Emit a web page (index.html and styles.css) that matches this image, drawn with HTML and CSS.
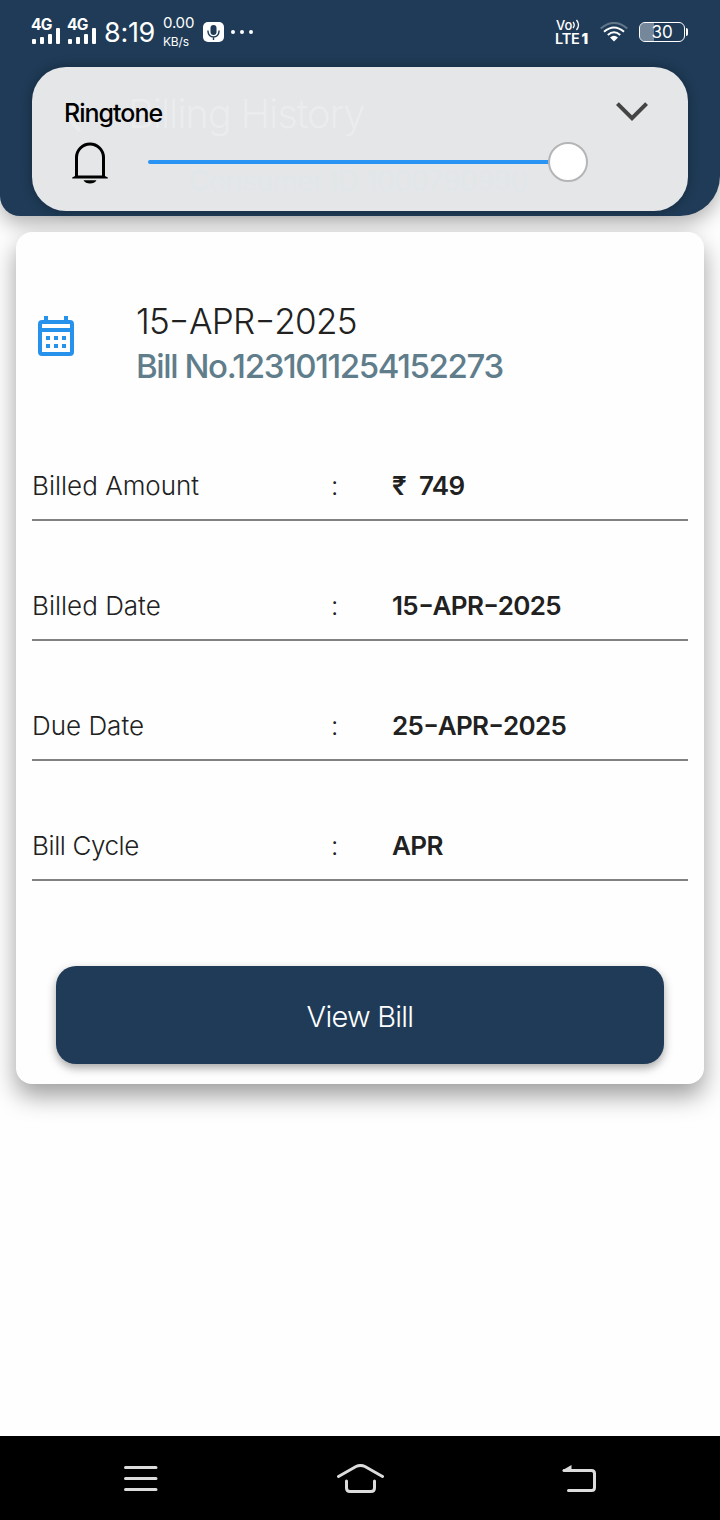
FILE: index.html
```html
<!DOCTYPE html>
<html lang="en">
  <head>
    <meta charset="UTF-8" />
    <meta name="viewport" content="width=device-width, initial-scale=1.0" />
    <title>Billing History</title>
    <link rel="stylesheet" href="styles.css">
  </head>
  <body>
    <header class="app-header">
      <div class="status-bar">
        <div class="status-left">
          <div class="signal">
            <span>4G</span>
            <svg width="28" height="27" viewBox="0 0 28 27" fill="#fff">
              <rect x="0" y="21" width="4" height="5" rx="1" />
              <rect x="8" y="19" width="4" height="7" rx="1" />
              <rect x="16" y="16" width="4" height="10" rx="1" />
              <rect x="24" y="10" width="4" height="16" rx="1" />
            </svg>
          </div>
          <div class="signal">
            <span>4G</span>
            <svg width="28" height="27" viewBox="0 0 28 27" fill="#fff">
              <rect x="0" y="21" width="4" height="5" rx="1" />
              <rect x="8" y="19" width="4" height="7" rx="1" />
              <rect x="16" y="16" width="4" height="10" rx="1" />
              <rect x="24" y="10" width="4" height="16" rx="1" />
            </svg>
          </div>
          <span class="clock">8:19</span>
          <div class="speed"><span>0.00</span><small>KB/s</small></div>
          <svg class="mic" width="21" height="20" viewBox="0 0 21 20">
            <rect width="21" height="20" rx="5" fill="#fff" />
            <rect x="7.5" y="3" width="6" height="10" rx="3" fill="#1f3b57" />
            <path d="M5 8.5v1a5.5 5.5 0 0 0 11 0v-1M10.5 15v3" fill="none" stroke="#1f3b57" stroke-width="1.4" />
          </svg>
          <svg class="dots" width="22" height="4" viewBox="0 0 22 4" fill="#fff">
            <circle cx="2" cy="2" r="2" />
            <circle cx="11" cy="2" r="2" />
            <circle cx="20" cy="2" r="2" />
          </svg>
        </div>
        <div class="status-right">
          <div class="volte">
            <div class="vo">Vo<svg width="8" height="12" viewBox="0 0 8 12" fill="none" stroke="#fff" stroke-width="1.3"><path d="M1 3q2.5 3 0 6M4.5 1q4 5 0 10" /></svg></div>
            <div class="lte">LTE<b>1</b></div>
          </div>
          <svg class="wifi" width="28" height="20" viewBox="0 0 28 20" fill="none" stroke="#fff" stroke-width="2">
            <path d="M.7 6.5Q14-4.6 27.3 6.5" opacity=".3" />
            <path d="M4 9.8Q14 1.2 24 9.8" />
            <path d="M7.8 13Q14 7.6 20.2 13" />
            <path d="M10 15.4Q14 12 18 15.4L14 19.5Z" fill="#fff" stroke="none" />
          </svg>
          <div class="battery"><span>30</span></div>
        </div>
      </div>
    </header>

    <!-- Volume panel -->
    <section class="volume-panel">
      <svg class="ghost-back" width="18" height="34" viewBox="0 0 18 34" fill="none" stroke="#e9ebec" stroke-width="4"><path d="M16 2L3 17l13 15" /></svg>
      <span class="ghost-title">Billing History</span>
      <span class="ghost-id">Consumer ID 1000790990</span>
      <div class="volume-head">
        <span class="volume-label">Ringtone</span>
        <svg width="32" height="20" viewBox="0 0 32 20" fill="none" stroke="#444" stroke-width="4"><path d="M1.4 1.6L16 16.2 30.6 1.6" /></svg>
      </div>
      <div class="volume-row">
        <svg class="bell" width="36" height="42" viewBox="0 0 36 42">
          <path d="M4.5 35V15.5a13.5 13.5 0 0 1 27 0V35" fill="none" stroke="#000" stroke-width="3" />
          <path d="M4 33.4h28l3.8 2v1H.2v-1z" />
          <path d="M11.5 38.2h13q-2 3.2-6.5 3.2t-6.5-3.2z" />
        </svg>
        <div class="slider">
          <div class="track"></div>
          <div class="thumb"></div>
        </div>
      </div>
    </section>

    <main class="card">
      <div class="bill-head">
        <svg width="36" height="40" viewBox="0 0 36 40" fill="#2792ec">
          <path fill-rule="evenodd" d="M6 0h4v4h16V0h4v4h2a4 4 0 0 1 4 4v28a4 4 0 0 1-4 4H4a4 4 0 0 1-4-4V8a4 4 0 0 1 4-4h2zM4 8v4h28V8zM4 16v20h28V16z" />
          <path d="M8 20h4v4H8zM16 20h4v4h-4zM24 20h4v4h-4zM8 28h4v4H8zM16 28h4v4h-4zM24 28h4v4h-4z" />
        </svg>
        <div>
          <div class="bill-date">15<b>-</b>APR<b>-</b>2025</div>
          <div class="bill-no">Bill No.1231011254152273</div>
        </div>
      </div>

      <div class="row">
        <span>Billed Amount</span>
        <span>:</span>
        <strong class="amount"><i>₹</i>749</strong>
      </div>
      <div class="row">
        <span>Billed Date</span>
        <span>:</span>
        <strong>15<b>-</b>APR<b>-</b>2025</strong>
      </div>
      <div class="row">
        <span>Due Date</span>
        <span>:</span>
        <strong>25<b>-</b>APR<b>-</b>2025</strong>
      </div>
      <div class="row">
        <span class="cycle">Bill Cycle</span>
        <span>:</span>
        <strong>APR</strong>
      </div>

      <button class="view-bill">View Bill</button>
    </main>

    <nav class="nav-bar">
      <svg width="34" height="26" viewBox="0 0 34 26" fill="none" stroke="#dcdcdc" stroke-width="3" stroke-linecap="round">
        <path d="M1.5 1.5h30.5M1.5 12.5h30.5M1.5 23.5h30.5" />
      </svg>
      <svg width="48" height="30" viewBox="0 0 48 30" fill="none" stroke="#dcdcdc" stroke-width="3" stroke-linecap="round">
        <path d="M2.5 12.5L20 2.5q4.5-2 9 0L46.5 12.5M10.5 17v7q0 3.5 3.5 3.5h21q3.5 0 3.5-3.5v-7" />
      </svg>
      <svg width="34" height="28" viewBox="0 0 34 28" fill="none" stroke="#dcdcdc" stroke-width="3" stroke-linecap="round">
        <path d="M2 5.5h27.5q3 0 3 3v14q0 3-3 3H6.5" />
        <path d="M0 5.5L9.5 0V6z" fill="#dcdcdc" stroke="none" />
      </svg>
    </nav>
  </body>
</html>
```
FILE: styles.css
```css
* {
  box-sizing: border-box;
}

body {
  margin: 0;
  height: 1520px;
  display: flex;
  flex-direction: column;
  position: relative;
  overflow: hidden;
  background: #fefefe;
  color: #212121;
  font-family: Inter, "Noto Sans", sans-serif;
}

svg {
  display: block;
  flex: none;
}

.app-header {
  height: 216px;
  flex: none;
  background: #1f3b57;
  border-radius: 0 0 40px 20px;
  box-shadow: 0 8px 20px rgba(0, 0, 0, 0.3);
  color: #fff;
}

.status-bar {
  height: 64px;
  padding: 0 35px 0 32px;
  display: flex;
  justify-content: space-between;
}

.status-left,
.status-right {
  display: flex;
  align-items: center;
}

.signal {
  position: relative;
  width: 28px;
  margin-right: 8px;
}

.signal svg {
  margin-top: -2px;
}

.signal span {
  position: absolute;
  left: -1px;
  top: -2px;
  font-size: 15.5px;
  line-height: 14px;
  font-weight: 700;
  letter-spacing: -0.8px;
}

.clock {
  width: 59px;
  font-size: 27px;
  letter-spacing: -0.3px;
}

.speed {
  width: 40px;
  font-size: 15px;
  line-height: 18px;
  letter-spacing: -0.2px;
}

.speed span,
.speed small {
  display: block;
}

.speed small {
  font-size: 12px;
  position: relative;
  top: 1px;
}

.mic {
  margin-right: 7px;
}

.volte {
  width: 45px;
  font-weight: 500;
}

.vo {
  display: flex;
  align-items: center;
  padding-left: 1px;
  font-size: 13px;
  line-height: 12px;
}

.lte {
  display: flex;
  gap: 2px;
  font-size: 14.5px;
  line-height: 15px;
  font-weight: 600;
  letter-spacing: -0.2px;
}

.wifi {
  margin-right: 11px;
}

.battery {
  position: relative;
  width: 46px;
  height: 20px;
  border: 1.5px solid #fff;
  border-radius: 6px;
  background: linear-gradient(to right, #75879a 14px, transparent 14px);
  background-clip: padding-box;
  font-size: 17px;
  line-height: 19px;
  text-align: center;
}

.battery::after {
  content: "";
  position: absolute;
  right: -4px;
  top: 5px;
  width: 2px;
  height: 8px;
  border-radius: 0 2px 2px 0;
  background: #fff;
}

/* volume panel */
.volume-panel {
  position: absolute;
  left: 32px;
  top: 67px;
  width: 656px;
  height: 144px;
  padding: 31px 40px 0 32px;
  border-radius: 34px;
  background: #e4e6e8;
  box-shadow: 0 0 12px rgba(0, 0, 0, 0.3);
  color: #000;
}

.ghost-back {
  position: absolute;
  left: 32px;
  top: 32px;
}

.ghost-title,
.ghost-id {
  position: absolute;
  font-weight: 300;
  white-space: nowrap;
}

.ghost-title {
  left: 96px;
  top: 23px;
  font-size: 40px;
  line-height: 48px;
  letter-spacing: -1.2px;
  color: #ebeced;
}

.ghost-id {
  left: 157px;
  top: 97px;
  font-size: 28px;
  line-height: 34px;
  letter-spacing: -0.1px;
  color: #e1e6e9;
}

.volume-head {
  position: relative;
  display: flex;
  justify-content: space-between;
  height: 43px;
}

.volume-head svg {
  margin-top: 4px;
}

.volume-label {
  font-size: 25px;
  line-height: 30px;
  font-weight: 500;
  letter-spacing: -1px;
}

.volume-row {
  position: relative;
  display: flex;
  align-items: center;
  height: 42px;
  padding-left: 8px;
}

.bell {
  margin-top: 1px;
}

.slider {
  display: flex;
  align-items: center;
  margin-left: 40px;
}

.track {
  width: 402px;
  height: 4px;
  border-radius: 2px;
  background: #2a94f4;
}

.thumb {
  width: 40px;
  height: 40px;
  margin-left: -2px;
  border: 2px solid #b5b5b5;
  border-radius: 50%;
  background: #fff;
}

/* bill card */
.card {
  position: relative;
  height: 852px;
  margin: 16px 16px 0;
  padding: 68px 16px 20px;
  border-radius: 16px;
  background: #fefefe;
  box-shadow: 0 12px 24px rgba(0, 0, 0, 0.38);
}

.bill-head {
  display: flex;
  gap: 62px;
  height: 100px;
  padding-left: 6px;
}

.bill-head svg {
  margin-top: 16px;
}

.bill-date {
  font-size: 35px;
  line-height: 42px;
  font-weight: 300;
  letter-spacing: -0.75px;
}

/* wide, raised dash between date parts */
.bill-date b,
.row strong b {
  display: inline-block;
  font-weight: inherit;
  font-feature-settings: "case";
  transform: scaleX(1.3);
}

.bill-date b {
  margin: 0 2.4px;
}

.row strong b {
  margin: 0 1.5px;
}

.bill-no {
  margin-top: 4px;
  font-size: 33px;
  line-height: 40px;
  font-weight: 500;
  letter-spacing: -1.38px;
  color: #607d8b;
}

.row {
  display: grid;
  grid-template-columns: 299px 61px 1fr;
  height: 121px;
  margin-bottom: -1px;
  padding-top: 69px;
  border-bottom: 2px solid #818181;
  font-size: 26px;
  line-height: 34px;
  font-weight: 300;
}

.row strong {
  font-weight: 570;
  letter-spacing: -0.65px;
}

.cycle {
  letter-spacing: -0.4px;
}

.amount i {
  display: inline-block;
  width: 27px;
  font-style: normal;
}

.view-bill {
  display: block;
  width: 608px;
  height: 98px;
  margin: 86px auto 0;
  padding: 3px 0 0;
  border: 0;
  border-radius: 20px;
  background: #1f3b57;
  box-shadow: 0 4px 10px rgba(0, 0, 0, 0.35);
  color: #fff;
  font: 300 29px Inter, sans-serif;
  letter-spacing: -0.75px;
}

.nav-bar {
  display: flex;
  align-items: center;
  justify-content: space-between;
  height: 84px;
  margin-top: auto;
  padding: 1px 124px 0;
  background: #000;
}
```
